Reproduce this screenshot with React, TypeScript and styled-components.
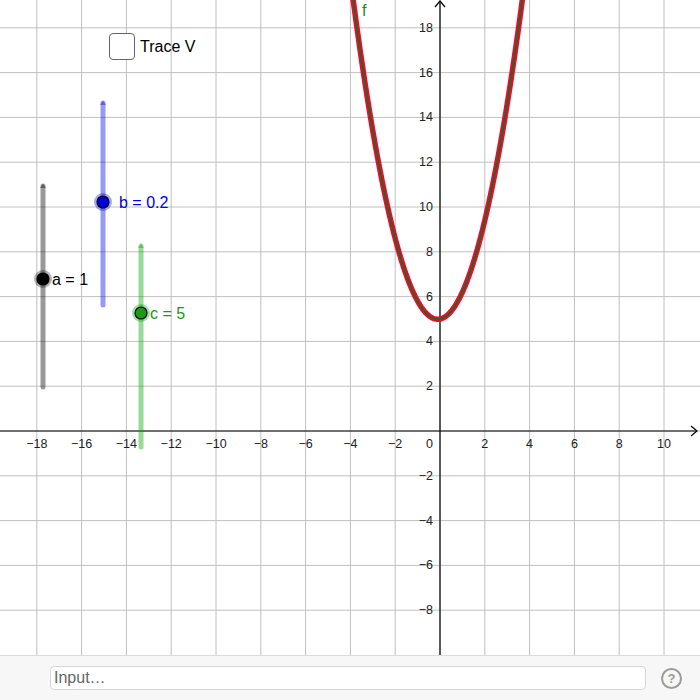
import React from 'react';
import styled, { createGlobalStyle } from 'styled-components';

const GlobalStyle = createGlobalStyle`
  html, body {
    margin: 0;
    padding: 0;
    background: #fff;
    font-family: 'Liberation Sans', Arial, sans-serif;
  }
`;

// graph coordinates
const UNIT = 22.4;
const OX = 440;
const OY = 431;
const VIEW_W = 700;
const VIEW_H = 655;

const sx = (x: number) => OX + x * UNIT;
const sy = (y: number) => OY - y * UNIT;

const a = 1;
const b = 0.2;
const c = 5;

const AppFrame = styled.div`
  width: 700px;
  height: 700px;
  display: flex;
  flex-direction: column;
  overflow: hidden;
`;

const GraphView = styled.div`
  position: relative;
  width: 700px;
  height: ${VIEW_H}px;
  flex: none;
`;

const GraphSvg = styled.svg`
  display: block;
  font-family: 'Liberation Sans', Arial, sans-serif;
`;

const GridLine = styled.line`
  stroke: #c0c0c0;
  stroke-width: 1;
`;

const AxisLine = styled.line`
  stroke: #000;
  stroke-width: 1.2;
`;

const TickLabel = styled.text`
  font-size: 12.5px;
  fill: #222;
`;

const SliderLabel = styled.text<{ $color: string }>`
  font-size: 16px;
  fill: ${({ $color }) => $color};
`;

const TraceBox = styled.label`
  position: absolute;
  left: 109px;
  top: 33px;
  display: flex;
  align-items: center;
  gap: 5px;
  font-size: 16px;
  color: #000;
  cursor: pointer;
`;

const CheckSquare = styled.span`
  width: 24px;
  height: 25px;
  border: 1.5px solid #666;
  border-radius: 4px;
  background: #fff;
  box-sizing: content-box;
`;

const InputBar = styled.div`
  flex: 1;
  display: flex;
  align-items: center;
  gap: 15px;
  padding: 0 18px 0 50px;
  background: #f7f7f7;
  border-top: 1px solid #dcdcdc;
`;

const InputField = styled.input`
  flex: 1;
  height: 24px;
  box-sizing: border-box;
  border: 1px solid #d6d6d6;
  border-radius: 4px;
  background: #fff;
  padding: 0 3px;
  font-family: 'Liberation Sans', Arial, sans-serif;
  font-size: 16px;
  color: #333;
  outline: none;

  &::placeholder {
    color: #666;
  }
`;

const HelpButton = styled.span`
  width: 17px;
  height: 17px;
  border: 2px solid #9a9a9a;
  border-radius: 50%;
  color: #9a9a9a;
  font-size: 13px;
  font-weight: bold;
  display: flex;
  align-items: center;
  justify-content: center;
  flex: none;
`;

interface SliderProps {
  x: number;
  top: number;
  bottom: number;
  pointY: number;
  track: string;
  fill: string;
  halo: string;
  label: string;
  labelColor: string;
  labelX: number;
}

const Slider = ({ x, top, bottom, pointY, track, fill, halo, label, labelColor, labelX }: SliderProps) => (
  <g>
    <line x1={x} y1={top + 2} x2={x} y2={bottom} stroke={track} strokeWidth={5} strokeLinecap="round" />
    <polygon points={`${x - 3},${top + 4} ${x},${top} ${x + 3},${top + 4}`} fill={track} />
    <circle cx={x} cy={pointY} r={9} fill={halo} />
    <circle cx={x} cy={pointY} r={6} fill={fill} stroke="#000" strokeWidth={1.2} />
    <SliderLabel $color={labelColor} x={labelX} y={pointY + 6}>
      {label}
    </SliderLabel>
  </g>
);

const fmt = (n: number) => (n < 0 ? `\u2212${Math.abs(n)}` : `${n}`);

const curvePath = () => {
  const pts: string[] = [];
  for (let px = 330; px <= 560; px += 1) {
    const x = (px - OX) / UNIT;
    const y = a * x * x + b * x + c;
    pts.push(`${pts.length ? 'L' : 'M'}${px.toFixed(1)},${sy(y).toFixed(2)}`);
  }
  return pts.join(' ');
};

const Graph = () => {
  const xs: number[] = [];
  for (let k = -9; k <= 5; k++) xs.push(k * 2);
  const ys: number[] = [];
  for (let k = -4; k <= 9; k++) ys.push(k * 2);
  const path = curvePath();

  return (
    <GraphSvg width={VIEW_W} height={VIEW_H} viewBox={`0 0 ${VIEW_W} ${VIEW_H}`}>
      {xs.map((v) => (
        <GridLine key={`gx${v}`} x1={sx(v)} y1={0} x2={sx(v)} y2={VIEW_H} />
      ))}
      {ys.map((v) => (
        <GridLine key={`gy${v}`} x1={0} y1={sy(v)} x2={VIEW_W} y2={sy(v)} />
      ))}

      <AxisLine x1={0} y1={OY} x2={697} y2={OY} />
      <AxisLine x1={OX} y1={1} x2={OX} y2={VIEW_H} />
      <polyline points={`691,${OY - 5} 697,${OY} 691,${OY + 5}`} fill="none" stroke="#000" strokeWidth={1.2} />
      <polyline points={`${OX - 5},7 ${OX},1 ${OX + 5},7`} fill="none" stroke="#000" strokeWidth={1.2} />

      {xs
        .filter((v) => v !== 0)
        .map((v) => (
          <TickLabel key={`lx${v}`} x={sx(v)} y={OY + 17} textAnchor="middle">
            {fmt(v)}
          </TickLabel>
        ))}
      <TickLabel x={OX - 7} y={OY + 17} textAnchor="end">
        0
      </TickLabel>
      {ys
        .filter((v) => v !== 0)
        .map((v) => (
          <TickLabel key={`ly${v}`} x={OX - 7} y={sy(v) + 4} textAnchor="end">
            {fmt(v)}
          </TickLabel>
        ))}

      <Slider x={43} top={184} bottom={387} pointY={279} track="rgba(0,0,0,0.4)" fill="#000" halo="rgba(0,0,0,0.3)" label="a = 1" labelColor="#000" labelX={52} />
      <Slider x={103} top={101} bottom={305} pointY={202} track="rgba(0,0,230,0.4)" fill="#0000d8" halo="rgba(0,0,230,0.35)" label="b = 0.2" labelColor="#0000e0" labelX={119} />
      <Slider x={141} top={244} bottom={447} pointY={313} track="rgba(0,160,0,0.4)" fill="#1a9a1a" halo="rgba(0,160,0,0.35)" label="c = 5" labelColor="#169a16" labelX={150} />

      <path d={path} fill="none" stroke="#ff0030" strokeWidth={5.5} strokeLinejoin="round" />
      <path d={path} fill="none" stroke="#1f6a1f" strokeWidth={2} strokeLinejoin="round" />

      <SliderLabel $color="#1a8a1a" x={362} y={16}>
        f
      </SliderLabel>
    </GraphSvg>
  );
};

export default function App() {
  return (
    <AppFrame>
      <GlobalStyle />
      <GraphView>
        <Graph />
        <TraceBox>
          <CheckSquare />
          Trace V
        </TraceBox>
      </GraphView>
      <InputBar>
        <InputField placeholder="Input…" />
        <HelpButton>?</HelpButton>
      </InputBar>
    </AppFrame>
  );
}
